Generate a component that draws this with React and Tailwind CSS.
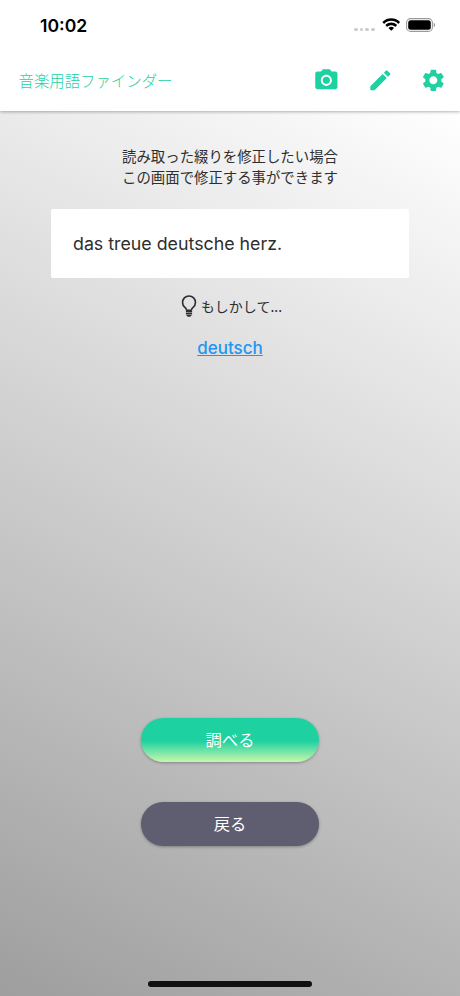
import { MdCameraAlt, MdEdit, MdSettings } from 'react-icons/md'

function StatusBar() {
  return (
    <div className="flex h-[50px] items-center justify-between pl-10 pr-[24px]">
      <div className="pt-px font-['Inter'] text-[17.600px] font-semibold leading-none text-black">10:02</div>
      <div className="flex items-center">
        <div className="mr-[6.500px] mt-[9px] flex gap-[2px]">
          <span className="h-[3.800px] w-[3.800px] rounded-full bg-[#cbcbcb]" />
          <span className="h-[3.800px] w-[3.800px] rounded-full bg-[#cbcbcb]" />
          <span className="h-[3.800px] w-[3.800px] rounded-full bg-[#cbcbcb]" />
          <span className="h-[3.800px] w-[3.800px] rounded-full bg-[#cbcbcb]" />
        </div>
        <svg width="18.500" height="13.400" viewBox="0.300 0 17.400 12.600" className="mr-[6px]">
          <path d="M9 2.7c2.4 0 4.7.9 6.4 2.6.1.1.3.1.5 0l1.2-1.3c.2-.1.2-.3 0-.5C12.600-.8 5.400-.8.9 3.500c-.2.200-.2.400 0 .5l1.200 1.300c.2.100.4.100.5 0C4.300 3.600 6.600 2.700 9 2.700z" />
          <path d="M9 6.800c1.300 0 2.600.5 3.600 1.400.1.100.3.100.5 0l1.200-1.300c.2-.1.2-.3 0-.5-3-2.800-7.600-2.800-10.600 0-.2.200-.2.400 0 .5l1.200 1.300c.2.100.4.100.5 0 1-.9 2.300-1.400 3.600-1.400z" />
          <path d="M11.400 9.600c.2-.2.200-.4 0-.5-1.400-1.200-3.400-1.200-4.800 0-.2.100-.2.300 0 .5l2.100 2.200c.2.200.4.200.6 0z" />
        </svg>
        <svg width="30" height="14" viewBox="0 0 30 14">
          <rect x=".6" y=".6" width="25.800" height="12.800" rx="4" fill="none" stroke="#9a9a9a" strokeWidth="1.100" />
          <rect x="2.200" y="2.200" width="22.600" height="9.600" rx="2.500" />
          <path d="M27.700 4.800v4.400c.9-.4 1.500-1.200 1.500-2.200s-.6-1.800-1.500-2.200z" fill="#9a9a9a" />
        </svg>
      </div>
    </div>
  )
}

function AppBar() {
  return (
    <div className="flex h-[60px] items-center justify-between pl-[18.500px] pr-[13.500px] text-[#1dd1a1]">
      <h1 className="pt-px text-[15.400px] font-light">音楽用語ファインダー</h1>
      <div className="flex gap-[26.600px]">
        <MdCameraAlt size={26.7} />
        <MdEdit size={26.7} />
        <MdSettings size={26.7} />
      </div>
    </div>
  )
}

function Bulb() {
  return (
    <svg width="16" height="24" viewBox="0 0 16 24" fill="none" stroke="#2e2e2e">
      <path d="M5.600 16.200c-.1-1.500-.7-2-1.900-3a6.450 6.450 0 1 1 8.600 0c-1.200 1-1.800 1.500-1.900 3z" strokeWidth="1.600" strokeLinejoin="round" />
      <path d="M4.900 17.800h6.200M4.900 19.800h6.200" strokeWidth="1.500" />
      <path d="M5.200 21h5.600l-1.500 1.700H6.700z" fill="#2e2e2e" stroke="none" />
    </svg>
  )
}

export default function App() {
  return (
    <div className="flex h-[996px] w-[460px] flex-col font-['Noto_Sans_CJK_JP',sans-serif]">
      <header className="z-10 h-[111px] bg-white shadow-[0_1px_3px_rgba(0,0,0,0.3)]">
        <StatusBar />
        <AppBar />
      </header>

      <main className="flex flex-1 flex-col items-center bg-[linear-gradient(207.500deg,#ffffff,#9e9e9e)]">
        <p className="mt-[34px] text-center text-[14.400px] leading-[21px] text-[#2e2e2e]">
          読み取った綴りを修正したい場合
          <br />
          この画面で修正する事ができます
        </p>

        <div className="mt-[22px] flex h-[69px] w-[358px] items-center rounded-[2px] bg-white pl-[22px] pt-[2px] font-['Inter'] text-[17.800px] text-[#2e2e2e]">
          das treue deutsche herz.
        </div>

        <div className="mt-4 flex h-6 items-center gap-1 pl-[3px] text-[14px] text-[#2e2e2e]">
          <Bulb />
          <span>もしかして...</span>
        </div>

        <a href="#" className="mt-[18px] font-['Inter'] text-[17px] font-medium leading-6 text-[#2196f3] underline">
          deutsch
        </a>

        <div className="mt-auto flex flex-col gap-10">
          <button className="h-[44px] w-[178px] rounded-full bg-[linear-gradient(180deg,#1dd1a1_52%,#c8f7ac)] pb-[2px] text-[16.300px] text-white shadow-[0_1px_3px_rgba(0,0,0,0.3)]">
            調べる
          </button>
          <button className="h-[44px] w-[178px] rounded-full bg-[#5f5d70] pb-[2px] text-[16.300px] text-white shadow-[0_1px_3px_rgba(0,0,0,0.3)]">
            戻る
          </button>
        </div>

        <div className="mb-[9px] mt-[135px] h-[6px] w-[164px] rounded-full bg-[#111111]" />
      </main>
    </div>
  )
}
